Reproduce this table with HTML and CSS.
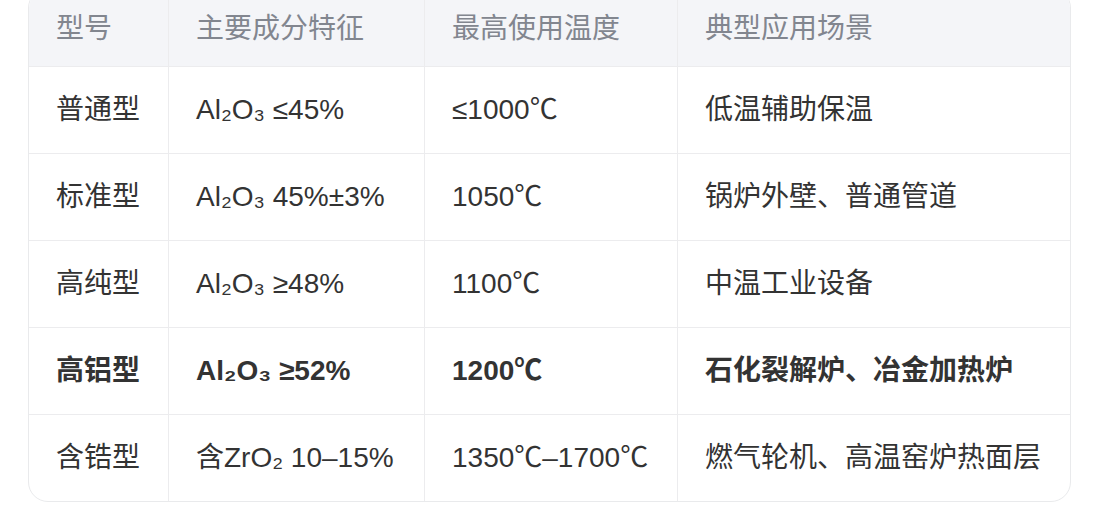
FILE: index.html
```html
<!DOCTYPE html>
<html lang="zh-CN">
<head>
<meta charset="utf-8">
<title>硅酸铝纤维型号对比</title>
<link rel="stylesheet" href="styles.css">
</head>
<body>
<div class="table-wrap">
  <table class="spec-table">
    <colgroup>
      <col class="c1"><col class="c2"><col class="c3"><col class="c4">
    </colgroup>
    <thead>
      <tr><th>型号</th><th>主要成分特征</th><th>最高使用温度</th><th>典型应用场景</th></tr>
    </thead>
    <tbody>
      <tr><td>普通型</td><td>Al₂O₃ ≤45%</td><td>≤1000℃</td><td>低温辅助保温</td></tr>
      <tr><td>标准型</td><td>Al₂O₃ 45%±3%</td><td>1050℃</td><td>锅炉外壁、普通管道</td></tr>
      <tr><td>高纯型</td><td>Al₂O₃ ≥48%</td><td>1100℃</td><td>中温工业设备</td></tr>
      <tr class="hl"><td>高铝型</td><td>Al₂O₃ ≥52%</td><td>1200℃</td><td>石化裂解炉、冶金加热炉</td></tr>
      <tr><td>含锆型</td><td>含ZrO₂ 10–15%</td><td>1350℃–1700℃</td><td>燃气轮机、高温窑炉热面层</td></tr>
    </tbody>
  </table>
</div>
</body>
</html>
```

FILE: styles.css
```css
html, body {
  margin: 0;
  padding: 0;
  background: #ffffff;
}

body {
  font-family: "Liberation Sans", "Noto Sans CJK SC", sans-serif;
  color: #333333;
}

.table-wrap {
  width: 1043px;
  box-sizing: border-box;
  margin: -12px 0 0 28px;
  border: 1px solid #e9eaec;
  border-radius: 20px;
  overflow: hidden;
}

.spec-table {
  width: 100%;
  table-layout: fixed;
  border-collapse: separate;
  border-spacing: 0;
  font-size: 28px;
  line-height: 42px;
}

.c1 { width: 140px; }
.c2 { width: 256px; }
.c3 { width: 253px; }
.c4 { width: 392px; }

.spec-table th,
.spec-table td {
  box-sizing: border-box;
  text-align: left;
  white-space: nowrap;
  border-right: 1px solid #ececee;
  border-bottom: 1px solid #ececee;
}

.spec-table th:last-child,
.spec-table td:last-child {
  border-right: none;
}

.spec-table tbody tr:last-child td {
  border-bottom: none;
}

.spec-table th {
  background: #f4f5f8;
  color: #82868f;
  font-weight: 400;
  padding: 19px 28px 16px 27px;
}

.spec-table td {
  padding: 22px 28px 22px 27px;
  color: #333333;
}

.spec-table tr.hl td {
  font-weight: 700;
}
```
